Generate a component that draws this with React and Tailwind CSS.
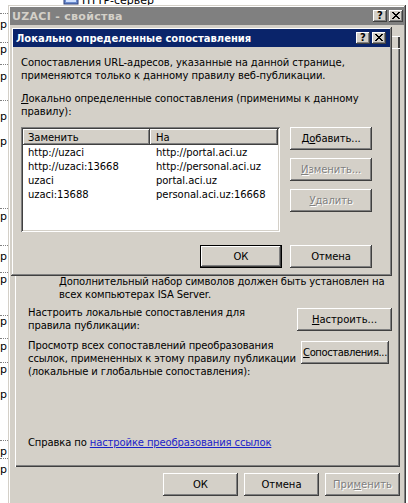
const FACE = 'bg-[#d4d0c8]'
const WINDOW_FRAME = 'shadow-[inset_-1px_-1px_#404040,inset_1px_1px_#d4d0c8,inset_-2px_-2px_#808080,inset_2px_2px_#fff]'
const RAISED = 'shadow-[inset_-1px_-1px_#404040,inset_1px_1px_#fff,inset_-2px_-2px_#808080]'
const DEFAULT_RAISED = 'shadow-[inset_0_0_0_1px_#000,inset_-2px_-2px_#404040,inset_2px_2px_#fff,inset_-3px_-3px_#808080]'
const SUNKEN = 'shadow-[inset_1px_1px_#808080,inset_-1px_-1px_#fff,inset_2px_2px_#404040,inset_-2px_-2px_#d4d0c8]'

// strip of the MMC list that shows at the left edge
const GLYPHS = [25, 50, 77, 117, 142, 217, 257, 280, 322, 347, 370, 395, 452, 470]
const DOTS = [13, 42, 64, 100, 208, 245, 272, 315, 338, 362, 440, 458]

const MAPPINGS = [
  ['http://uzaci', 'http://portal.aci.uz'],
  ['http://uzaci:13668', 'http://personal.aci.uz'],
  ['uzaci', 'portal.aci.uz'],
  ['uzaci:13688', 'personal.aci.uz:16668'],
]

function LeftStrip() {
  const items = [
    ...GLYPHS.map((y) => ({ top: y - 6, h: 12, kind: 'glyph' })),
    ...DOTS.map((y) => ({ top: y, h: 1, kind: 'dot' })),
  ].sort((a, b) => a.top - b.top)
  let cur = 0
  return (
    <div className="w-[8px] shrink-0 flex flex-col overflow-hidden">
      {items.map((it, i) => {
        const gap = Math.max(0, it.top - cur)
        cur = Math.max(cur, it.top) + it.h
        return (
          <div key={i} style={{ marginTop: gap }}>
            {it.kind === 'glyph' ? (
              <div className="h-[12px] leading-[12px] text-[11px]">р</div>
            ) : (
              <div className="h-px border-t border-dotted border-[#808080]" />
            )}
          </div>
        )
      })}
    </div>
  )
}

function Btn({ children, className = '', disabled, isDefault }) {
  return (
    <div
      className={`flex items-center justify-center h-[23px] whitespace-nowrap ${FACE} ${isDefault ? DEFAULT_RAISED : RAISED} ${
        disabled ? 'text-[#808080] [text-shadow:1px_1px_0_#fff]' : 'text-black'
      } ${className}`}
    >
      {children}
    </div>
  )
}

function U({ children }) {
  return <span className="underline underline-offset-[1px]">{children}</span>
}

function CaptionButtons() {
  return (
    <div className="flex items-center gap-[2px]">
      <div className={`w-[14px] h-[12px] ${FACE} ${RAISED} flex items-center justify-center text-black font-bold text-[10px] leading-none pb-[1px]`}>
        ?
      </div>
      <div className={`w-[14px] h-[12px] ${FACE} ${RAISED} flex items-center justify-center pb-[1px]`}>
        <svg width="8" height="7" viewBox="0 0 8 7" shapeRendering="crispEdges">
          <path d="M0 0h2v1h-2zM6 0h2v1h-2zM1 1h2v1h-2zM5 1h2v1h-2zM2 2h4v1h-4zM3 3h2v1h-2zM2 4h4v1h-4zM1 5h2v1h-2zM5 5h2v1h-2zM0 6h2v1h-2zM6 6h2v1h-2z" fill="#000" />
        </svg>
      </div>
    </div>
  )
}

function ParentWindow() {
  return (
    <div className={`absolute left-[8px] top-[5px] w-[398px] h-[520px] ${FACE} ${WINDOW_FRAME} p-[2px] flex flex-col`}>
      <div className="h-[18px] bg-[#808080] flex items-center justify-between pl-[2px] pr-[1px]">
        <span className="font-bold text-[#d4d0c8] text-[11px] tracking-[0.3px]">UZACI - свойства</span>
        <CaptionButtons />
      </div>

      <div className="flex flex-col pl-[5px] pr-[4px]">
        {/* tab headers row, mostly hidden by the child dialog */}
        <div className="h-[23px] flex justify-end items-end">
          <div className="w-[40px] h-[12px] rounded-tl-[2px] border-l border-t border-white shadow-[inset_-2px_0_#404040]" />
        </div>

        <div className="h-[419px] flex flex-col whitespace-nowrap tracking-[-0.12px] shadow-[inset_1px_1px_#fff,inset_-1px_-1px_#404040,inset_-2px_-2px_#808080] pt-[227px]">
          <div className="ml-[44px]">
            <div>Дополнительный набор символов должен быть установлен на</div>
            <div>всех компьютерах ISA Server.</div>
          </div>

          <div className="mt-[5px] flex items-start pl-[13px]">
            <div>
              <div>Настроить локальные сопоставления для</div>
              <div>правила публикации:</div>
            </div>
            <Btn className="ml-auto mr-[8px] mt-[2px] w-[95px] tracking-normal">
              <span><U>Н</U>астроить...</span>
            </Btn>
          </div>

          <div className="mt-[7px] flex items-start pl-[13px]">
            <div>
              <div>Просмотр всех сопоставлений преобразования</div>
              <div>ссылок, примененных к этому правилу публикации</div>
              <div>(локальные и глобальные сопоставления):</div>
            </div>
            <Btn className="ml-auto mr-[11px] mt-[2px] w-[88px] tracking-[-0.4px]">
              <span><U>С</U>опоставления...</span>
            </Btn>
          </div>

          <div className="mt-[58px] pl-[13px]">
            Справка по <span className="text-[#1a22c8] underline underline-offset-[1px]">настройке преобразования ссылок</span>
          </div>
        </div>

        <div className="mt-[6px] flex justify-end gap-[6px]">
          <Btn className="w-[75px]">ОК</Btn>
          <Btn className="w-[75px]">Отмена</Btn>
          <Btn className="w-[75px]" disabled>
            <span>При<U>м</U>енить</span>
          </Btn>
        </div>
      </div>
    </div>
  )
}

function MappingsDialog() {
  return (
    <div className={`absolute left-[11px] top-[27px] w-[381px] h-[249px] ${FACE} ${WINDOW_FRAME} p-[2px] flex flex-col whitespace-nowrap`}>
      <div className="h-[18px] bg-[#0a246a] flex items-center justify-between pl-[3px] pr-[4px]">
        <span className="font-bold text-white text-[10px]">Локально определенные сопоставления</span>
        <CaptionButtons />
      </div>

      <div className="flex flex-col pl-[8px] pr-[18px] pt-[9px] tracking-[-0.06px]">
        <div>
          <div>Сопоставления URL-адресов, указанные на данной странице,</div>
          <div>применяются только к данному правилу веб-публикации.</div>
        </div>
        <div className="mt-[10px]">
          <div><U>Л</U>окально определенные сопоставления (применимы к данному</div>
          <div>правилу):</div>
        </div>

        <div className="mt-[9px] flex gap-[10px]">
          <div className={`w-[260px] h-[105px] bg-white ${SUNKEN} p-[2px] flex flex-col`}>
            <div className="h-[16px] flex">
              <div className={`w-[127px] h-full ${FACE} ${RAISED} pl-[5px] flex items-center`}>Заменить</div>
              <div className={`flex-1 h-full ${FACE} ${RAISED} pl-[6px] flex items-center`}>На</div>
            </div>
            {MAPPINGS.map(([from, to]) => (
              <div key={from} className="h-[14px] flex items-center">
                <div className="w-[127px] pl-[5px]">{from}</div>
                <div className="pl-[6px]">{to}</div>
              </div>
            ))}
          </div>

          <div className="w-[82px] flex flex-col gap-[8px]">
            <Btn><span>Д<U>о</U>бавить...</span></Btn>
            <Btn disabled><span><U>И</U>зменить...</span></Btn>
            <Btn disabled><span><U>У</U>далить</span></Btn>
          </div>
        </div>

        <div className="mt-[13px] flex justify-end gap-[8px]">
          <Btn className="w-[82px]" isDefault>ОК</Btn>
          <Btn className="w-[82px]">Отмена</Btn>
        </div>
      </div>
    </div>
  )
}

export default function App() {
  return (
    <div className="relative w-[408px] h-[503px] overflow-hidden bg-white font-['DejaVu_Sans',sans-serif] text-[10px] leading-[13px] text-black">
      <div className="flex h-full">
        <LeftStrip />
        <div className="flex-1">
          <div className="-mt-[7px] ml-[55px] flex items-center gap-[3px]">
            <svg width="16" height="14" viewBox="0 0 16 14">
              <rect x="1" y="1" width="14" height="10" fill="#6a8ccf" stroke="#2d3f7a" />
              <rect x="3" y="3" width="10" height="6" fill="#cfe0ff" />
            </svg>
            <span className="text-[11px]">HTTP-сервер</span>
          </div>
        </div>
      </div>
      <ParentWindow />
      <MappingsDialog />
    </div>
  )
}
